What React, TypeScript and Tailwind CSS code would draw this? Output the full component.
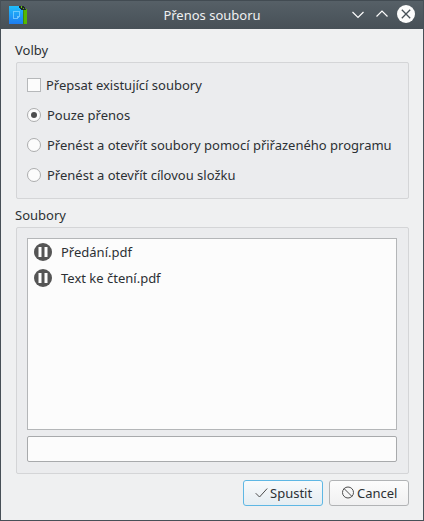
import type { ReactNode } from 'react';

function Radio({ checked, children }: { checked?: boolean; children: ReactNode }) {
  return (
    <label className="flex h-[30px] items-center">
      <span className="flex size-[14px] shrink-0 items-center justify-center rounded-full border border-[#acadae] bg-[#fcfcfc]">
        {checked && <span className="size-[6px] rounded-full bg-[#4d4e4f]" />}
      </span>
      <span className="ml-1.5 whitespace-nowrap">{children}</span>
    </label>
  );
}

function FileRow({ name }: { name: string }) {
  return (
    <li className="flex h-[26px] items-center">
      <svg width="18" height="18" viewBox="0 0 18 18">
        <circle cx="9" cy="9" r="9" fill="#555555" />
        <path d="M4.5 4h3v10h-3zM10.5 4h3v10h-3z" fill="#fff" />
      </svg>
      <span className="ml-[9px]">{name}</span>
    </li>
  );
}

export default function App() {
  return (
    <div className="flex h-[521px] w-[424px] flex-col border border-t-0 border-[#475057] bg-[#eff0f1] font-['Noto_Sans',sans-serif] text-[13px] leading-[18px] text-[#2c3034]">
      <header className="flex h-[29px] shrink-0 items-center justify-between border-t border-[#424b52] bg-linear-to-b from-[#566067] to-[#475057] px-2 text-[#eff0f1]">
        <div className="w-[70px]">
          <svg width="18" height="18" viewBox="0 0 18 18" shapeRendering="crispEdges">
            <defs>
              <linearGradient id="blue" x1="0" y1="0" x2="0" y2="1">
                <stop offset="0" stopColor="#20bdfb" />
                <stop offset="1" stopColor="#1d7cf0" />
              </linearGradient>
            </defs>
            <path d="M12 3h6v15h-6z" fill="#55b800" />
            <path d="M14 4h1v14h-1z" fill="#3f8d09" />
            <path d="M10 0h5v1h1v2h1v1h-7z" fill="#20282b" />
            <path d="M12 0h1v2h-1zM14 2h1v1h-1z" fill="#60c509" />
            <path d="M0 0h10v2h1v1h1v1h2v14H0z" fill="url(#blue)" />
            <path d="M4.5 5.5h6v5l-2 2h-4zM8.5 12v-2h2" fill="none" stroke="#7fd1ff" strokeOpacity="0.8" />
          </svg>
        </div>
        <h1>Přenos souboru</h1>
        <div className="flex w-[70px] justify-end">
          <svg width="67" height="20" viewBox="0 0 67 20" fill="none" stroke="#fcfcfc" strokeWidth="1.2">
            <path d="m4.5 7 5.5 5.5L15.5 7M28.5 11.5 34 6l5.5 5.5" />
            <circle cx="58" cy="9" r="9" fill="#fcfcfc" stroke="none" />
            <path d="m53.8 4.8 8.4 8.4m0-8.4-8.4 8.4" stroke="#475057" strokeWidth="1.3" />
          </svg>
        </div>
      </header>
      <main className="px-[14px] pt-3">
        <h2 className="h-[21px]">Volby</h2>
        <fieldset className="ml-px h-[137px] w-[393px] rounded-[2px] border border-[#d4d5d7] bg-[#ebecee] px-2.5 pt-[7px]">
          <label className="mb-px flex h-[29px] items-center">
            <span className="size-[14px] border border-[#b6b8ba] bg-[#fcfcfc]" />
            <span className="ml-[5px]">Přepsat existující soubory</span>
          </label>
          <Radio checked>Pouze přenos</Radio>
          <Radio>Přenést a otevřít soubory pomocí přiřazeného programu</Radio>
          <Radio>Přenést a otevřít cílovou složku</Radio>
        </fieldset>
        <h2 className="mt-[7px] h-[21px]">Soubory</h2>
        <section className="ml-px h-[247px] w-[393px] rounded-[2px] border border-[#d4d5d7] bg-[#ebecee] px-2.5 pt-2.5">
          <ul className="h-[192px] w-[370px] border border-[#b4b6b8] bg-[#fcfcfc] px-1.5">
            <FileRow name="Předání.pdf" />
            <FileRow name="Text ke čtení.pdf" />
          </ul>
          <div className="mt-1.5 h-[26px] w-[370px] rounded-[2px] border border-[#a8aaac] bg-[#fcfcfc]" />
        </section>
        <footer className="mt-1.5 flex w-[394px] justify-end gap-1.5">
          <button className="flex h-[26px] w-[80px] items-center rounded-[3px] border border-[#5eb7e4] bg-linear-to-b from-[#f8fafb] to-[#e5edf2] pl-[11px]">
            <svg width="13" height="14" viewBox="0 0 13 14" fill="none" stroke="#4d4d4d">
              <path d="m.7 7.2 3.8 3.8L12.2 2.5" />
            </svg>
            <span className="ml-[2px]">Spustit</span>
          </button>
          <button className="flex h-[26px] w-[80px] items-center rounded-[3px] border border-[#b1b3b5] bg-linear-to-b from-[#fcfcfc] to-[#f0f0f1] pl-[11px]">
            <svg width="14" height="14" viewBox="0 0 14 14" fill="none" stroke="#4d4d4d">
              <circle cx="7" cy="6.5" r="5.5" />
              <path d="m3 2.5 8 8" />
            </svg>
            <span className="ml-[2px]">Cancel</span>
          </button>
        </footer>
      </main>
    </div>
  );
}
